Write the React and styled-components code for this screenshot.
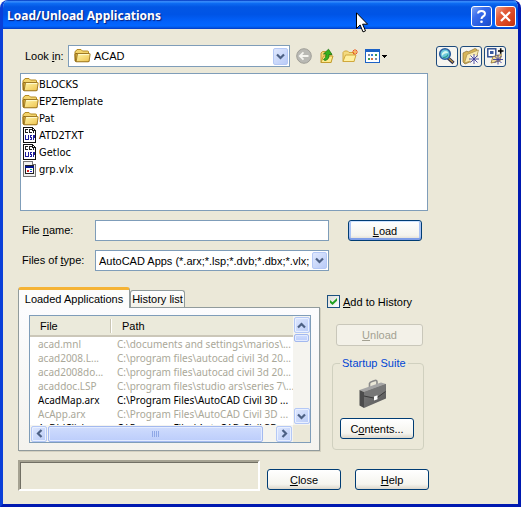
import React, {useState} from 'react';
import styled, {createGlobalStyle, css} from 'styled-components';

const GlobalStyle = createGlobalStyle`
    * {
        box-sizing: border-box;
    }
    body {
        margin: 0;
        background-color: #fff;
        color: #000;
        font: 11px/14px "Liberation Sans", Arial, sans-serif;
    }
    button, input, select {
        margin: 0;
        font: inherit;
        color: inherit;
    }
`
const Window = styled.div`
    min-width: 480px;
    border: solid #0a3fd8;
    border-width: 0 3px 3px;
    border-right-color: #0019b0;
    border-bottom-color: #0019b0;
    border-radius: 8px 8px 0 0;
    background-color: #ebe8d8;
    overflow: hidden;
`
const TitleBar = styled.header`
    position: relative;
    display: flex;
    align-items: center;
    gap: 3px;
    height: 29px;
    margin: 0 -3px;
    padding: 3px 5px 0 7px;
    background: linear-gradient(#0a4fd0 0, #3c94ff 5%, #0d6bf2 12%, #0256e4 24%, #0054e6 50%, #0261fb 75%, #0366ff 88%, #0452d8 100%);
    box-shadow: inset 2px 0 2px #0a3fd0, inset -2px 0 2px #001ea0;
`
const Title = styled.h1`
    flex: 1;
    margin: 0;
    color: #fff;
    font: bold 12px/20px "Noto Sans", sans-serif;
    text-shadow: 1px 1px 1px #0b1f7c;
`
const CaptionButton = styled.button`
    display: flex;
    align-items: center;
    justify-content: center;
    width: 21px;
    height: 21px;
    padding: 0;
    border: 1px solid #fff;
    border-radius: 3px;
    background: ${({$close}) => $close
        ? 'linear-gradient(135deg, #f0a08a 0, #e25a38 35%, #d6401a 75%, #b83412 100%)'
        : 'linear-gradient(135deg, #7fa4f5 0, #3a6cec 35%, #2358dc 75%, #1d49c2 100%)'};
`
const Pointer = styled.svg`
    position: absolute;
    top: 12px;
    left: 356px;
    pointer-events: none;
    z-index: 1;
`
const Body = styled.main`
    padding: 16px 0 13px 15px;
`
const LookRow = styled.div`
    display: flex;
    align-items: center;
    padding: 0 12px 0 7px;
`
const LookLabel = styled.label`
    width: 43px;
`
const Combo = styled.div`
    display: flex;
    align-items: center;
    flex: 1;
    min-width: 0;
    height: ${({$tall}) => $tall ? 22 : 21}px;
    padding: 1px 1px 1px ${({$tall}) => $tall ? 5 : 0}px;
    border: 1px solid #7f9db9;
    background-color: #fff;
`
const ComboSelect = styled.select`
    flex: 1;
    min-width: 0;
    height: 17px;
    padding: 0 3px;
    border: 0;
    outline: 0;
    background: none;
    appearance: none;
    white-space: nowrap;
    overflow: hidden;
    text-overflow: clip;
`
/*квадратная кнопка со стрелкой: комбобоксы и полосы прокрутки*/
const arrowFace = css`
    display: flex;
    align-items: center;
    justify-content: center;
    flex: none;
    padding: 0;
    border: 1px solid #b4c8f6;
    border-radius: 2px;
    background: linear-gradient(135deg, #dfe8fe, #b9cbf7);
`
const ComboArrow = styled.span`
    ${arrowFace}
    width: 15px;
    height: 17px;
    pointer-events: none;
`
const ScrollArrow = styled.button`
    ${arrowFace}
    width: 16px;
    height: 16px;
    box-shadow: inset 0 0 0 1px #e9f0ff;
`
const NavTools = styled.div`
    display: flex;
    align-items: center;
    gap: 7px;
    margin: 0 48px 0 6px;
`
const NavButton = styled.button`
    display: flex;
    padding: 0;
    border: 0;
    background: none;
`
const ToolGroup = styled.div`
    display: flex;
    gap: 2px;
`
const ToolButton = styled.button`
    display: flex;
    align-items: center;
    justify-content: center;
    width: 22px;
    height: 21px;
    padding: 0;
    border: 1px solid #1d4a7c;
    border-radius: 3px;
    background-color: #f6f5f0;
`
const FileList = styled.ul`
    min-height: 138px;
    margin: 6px 90px 0 2px;
    padding: 2px 1px;
    border: 1px solid #7f9db9;
    background-color: #fff;
    list-style: none;
    font-family: "DejaVu Sans Condensed", "DejaVu Sans", sans-serif;
`
const FileItem = styled.li`
    display: flex;
    align-items: center;
    height: 17px;
`
const Fields = styled.div`
    display: grid;
    grid-template-columns: 73px 1fr 74px;
    grid-auto-rows: 21px;
    align-items: center;
    gap: 9px 0;
    margin: 9px 96px 0 4px;
`
const FieldLabel = styled.label`
    padding-bottom: 2px;
`
const FieldCell = styled.div`
    display: flex;
    min-width: 0;
    margin-right: 19px;
`
const TextInput = styled.input`
    width: 100%;
    height: 21px;
    padding: 0 3px;
    border: 1px solid #7f9db9;
    outline: 0;
    background-color: #fff;
`
const PushButton = styled.button`
    width: ${({$wide}) => $wide ? 87 : 74}px;
    height: ${({$wide}) => $wide ? 22 : 21}px;
    padding: 0;
    border: 1px solid #003c74;
    border-radius: 3px;
    background: linear-gradient(#fff, #f5f4ee 75%, #dcd7cc);
    ${({$primary}) => $primary && css`
        box-shadow: inset 0 1px 0 #cee3ff, inset 0 -2px 0 #7f9ee8, inset 2px 0 0 #a9c3f5, inset -2px 0 0 #a9c3f5;
    `}
    &:disabled {
        border-color: #c9c7ba;
        background: #f3f1e8;
        color: #a3a192;
    }
`
const Lower = styled.div`
    display: flex;
    gap: 7px;
    margin: 16px 94px 0 0;
`
const TabBox = styled.section`
    flex: 1;
    min-width: 0;
`
const TabBar = styled.div`
    display: flex;
    align-items: flex-end;
    height: 20px;
`
const Tab = styled.button`
    position: relative;
    width: ${({$active}) => $active ? 112 : 55}px;
    height: ${({$active}) => $active ? 21 : 17}px;
    margin-bottom: ${({$active}) => $active ? -1 : 0}px;
    padding: 0;
    border: 1px solid #919b9c;
    border-bottom: 0;
    border-radius: 3px 3px 0 0;
    background: linear-gradient(#fff, #f3f2ea);
    white-space: nowrap;
    z-index: 1;
    ${({$active}) => $active && css`
        border-top: 3px solid #f5b335;
        background: #fcfcfb;
    `}
`
const TabPanel = styled.div`
    padding: 7px 8px 7px 10px;
    border: 1px solid #919b9c;
    background: linear-gradient(#fcfcfe, #f4f3ee);
    box-shadow: 1px 1px 0 #d3d0c0;
`
const ListFrame = styled.div`
    display: grid;
    grid-template-columns: 1fr 17px;
    grid-template-rows: 109px 17px;
    border: 1px solid #7f9db9;
    background-color: #ebe8d8;
`
const TableView = styled.div`
    overflow: hidden;
    background-color: #fff;
`
const AppTable = styled.table`
    width: 100%;
    table-layout: fixed;
    border-collapse: separate;
    border-spacing: 0;
`
const HeadCell = styled.th`
    width: ${({$width}) => $width || 'auto'};
    height: 21px;
    padding: 0 0 0 10px;
    border-bottom: 2px solid #cbc7b8;
    background: linear-gradient(90deg, #c9c5b3 50%, #fff 50%) right center / 2px 14px no-repeat #ebeadb;
    font-weight: normal;
    text-align: left;
    &:last-child {
        background: #ebeadb;
    }
`
const Cell = styled.td`
    height: 14px;
    padding: 0 0 0 ${({$path}) => $path ? 5 : 8}px;
    color: ${({$dim}) => $dim ? '#aaa899' : '#000'};
    font: 10px/14px "Noto Sans", sans-serif;
    white-space: nowrap;
`
const Track = styled.div`
    display: flex;
    flex-direction: ${({$horizontal}) => $horizontal ? 'row' : 'column'};
    align-items: center;
    padding: ${({$horizontal}) => $horizontal ? '0 1px' : '1px 0'};
    background-color: #f5f4ef;
`
const Thumb = styled.div`
    display: flex;
    align-items: center;
    justify-content: center;
    flex: ${({$horizontal}) => $horizontal ? '1 1 auto' : '0 0 8px'};
    width: ${({$horizontal}) => $horizontal ? 'auto' : '15px'};
    height: ${({$horizontal}) => $horizontal ? '16px' : '8px'};
    margin: ${({$horizontal}) => $horizontal ? '0 13px 0 1px' : '1px 0 auto'};
    border: 1px solid #a3b9ef;
    border-radius: 2px;
    background: linear-gradient(#cfdcfd, #bccdfb);
    box-shadow: inset 0 0 0 1px #e3ebff;
`
const SideColumn = styled.aside`
    width: 97px;
    padding-top: 8px;
`
const CheckRow = styled.label`
    display: flex;
    align-items: center;
    gap: 3px;
    height: 13px;
    white-space: nowrap;
`
const CheckBox = styled.input`
    position: relative;
    width: 13px;
    height: 13px;
    border: 1px solid #1c5180;
    background: linear-gradient(135deg, #dcdcd7, #fff);
    appearance: none;
    &:checked::after {
        content: "";
        position: absolute;
        inset: 2px;
        background-color: #21a121;
        clip-path: polygon(0 28%, 36% 62%, 100% 0, 100% 40%, 36% 100%, 0 68%);
    }
`
const UnloadRow = styled.div`
    display: flex;
    margin: 16px 0 10px 9px;
`
const Suite = styled.fieldset`
    min-width: 0;
    height: 94px;
    margin: 0 0 0 5px;
    padding: 0 7px;
    border: 1px solid #d0d0bf;
    border-radius: 4px;
    legend {
        padding: 0 2px;
        color: #0046d5;
        white-space: nowrap;
    }
`
const SuiteBody = styled.div`
    display: flex;
    flex-direction: column;
    gap: 9px;
    padding-top: 9px;
    svg {
        margin-left: 19px;
    }
`
const Footer = styled.footer`
    display: flex;
    align-items: flex-end;
    margin: 9px 89px 0 0;
`
const StatusBox = styled.output`
    flex: 1;
    height: 31px;
    margin-right: 7px;
    border: 2px solid;
    border-color: #a5a292 #fff #fff #a5a292;
    box-shadow: inset 1px 1px 0 #716f64;
`
const FooterButtons = styled.div`
    display: flex;
    gap: 14px;
    padding-bottom: 1px;
`

const FolderIcon = () => (
    <svg width="17" height="16" viewBox="0 0 17 16">
        <path d="M1 13V4q0-1 1-1l1-1.500h4l1.500 1.500h5q1 0 1 1v2" fill="#f3d46c" stroke="#b48a22"/>
        <path d="M1.500 13.500L1 6.500q0-1 1-1h11.500l1.500 8z" fill="#d9ab3c" stroke="#8f6a14"/>
        <path d="M3.500 5.500h12q.8 0 .6 1l-1 6.500q-.2.800-1 .8h-12z" fill="url(#folderFace)" stroke="#9a7420" strokeWidth=".9"/>
        <path d="M4.300 6.600h10.600" stroke="#fffbd2"/>
        <defs>
            <linearGradient id="folderFace" x1="0" y1="0" x2="1" y2="1">
                <stop offset="0" stopColor="#fff6a8"/>
                <stop offset="1" stopColor="#eec24e"/>
            </linearGradient>
        </defs>
    </svg>
)
const LispIcon = () => (
    <svg width="17" height="17" viewBox="0 0 17 17" shapeRendering="crispEdges">
        <path d="M1.500.500h9l3 3v12h-12z" fill="#fff" stroke="#111"/>
        <path d="M10.500.500v3h3" fill="none" stroke="#111"/>
        <path d="M5.500 2.500h-2v3h2M9.500 2.500h-2v3h2M11.500 4v2" fill="none" stroke="#222"/>
        <path d="M3.500 8v4.500h2M6.500 8v5M10 8.500H8.500v2h1v2H8M11.500 13V8.500h1v2h-1" fill="none" stroke="#1c1c9c"/>
    </svg>
)
const VlxIcon = () => (
    <svg width="17" height="17" viewBox="0 0 17 17" shapeRendering="crispEdges">
        <path d="M1.500.500h9l3 3v12h-12z" fill="#f0f0f0" stroke="#777"/>
        <path d="M10.500.500v3h3" fill="#fff" stroke="#777"/>
        <rect x="3.500" y="4.500" width="8" height="8" fill="#fff" stroke="#222"/>
        <path d="M3 5.500h9" stroke="#00148c" strokeWidth="2"/>
        <path d="M5 9h2v2H5z" fill="#d22"/>
        <path d="M8 8h2v1H8z" fill="#1a9"/>
        <path d="M8 10h2v1H8z" fill="#22c"/>
    </svg>
)
const icons = {folder: FolderIcon, lisp: LispIcon, vlx: VlxIcon}

const Chevron = ({turn = 0}) => (
    <svg width="9" height="9" viewBox="0 0 9 9">
        <path d="M1 2.500l3.500 3.500L8 2.500" fill="none" stroke="#4d6185" strokeWidth="2.200" transform={`rotate(${turn} 4.500 4.500)`}/>
    </svg>
)
const BackIcon = () => (
    <svg width="16" height="16" viewBox="0 0 16 16">
        <circle cx="8" cy="8" r="7.300" fill="#b9b9b4" stroke="#a09f98"/>
        <path d="M12.500 8H4M7.500 4.300L3.800 8l3.700 3.700" fill="none" stroke="#f5f5f0" strokeWidth="1.800"/>
    </svg>
)
const UpIcon = () => (
    <svg width="16" height="16" viewBox="0 0 16 16">
        <path d="M2 14.500V5l1.500-1.500h3L8 5h4v9.500z" fill="#f2d572" stroke="#c39c2e"/>
        <path d="M2 14.500L4.500 8H14l-2 6.500z" fill="#fdea8c" stroke="#c39c2e"/>
        <path d="M6 12.500q4.500-1 4-6H13L9.500 1.200 4.500 6H7q.5 3.500-2.500 5.500z" fill="#34b21f" stroke="#1d7410" strokeWidth=".8"/>
    </svg>
)
const NewFolderIcon = () => (
    <svg width="16" height="16" viewBox="0 0 16 16">
        <path d="M1 13.500v-9L2.500 3h3L7 4.500h5v9z" fill="#f4da80" stroke="#d0a83c"/>
        <path d="M1 13.500L3.500 7H14l-2 6.500z" fill="#fff0a0" stroke="#d0a83c"/>
        <path d="M13 1v6M10 4h6M11 2l4 4M15 2l-4 4" stroke="#ec5a1c"/>
        <circle cx="13" cy="4" r="1" fill="#ffe26a"/>
    </svg>
)
const ViewIcon = () => (
    <svg width="23" height="16" viewBox="0 0 23 16" shapeRendering="crispEdges">
        <rect x=".5" y="1.500" width="14" height="13" fill="#fff" stroke="#1c62c6"/>
        <path d="M0 2.500h15" stroke="#1c62c6" strokeWidth="3"/>
        <path d="M3 6h2v2H3zM10 10h2v2h-2z" fill="#7d8ba8"/>
        <path d="M6 6h2v2H6z" fill="#3b79d4"/>
        <path d="M10 6h2v2h-2zM3 10h2v2H3z" fill="#3d9b55"/>
        <path d="M6 10h2v2H6z" fill="#d8713b"/>
        <path d="M17 7h5v1h-1v1h-1v1h-1V9h-1V8h-1z" fill="#000"/>
    </svg>
)
const FindIcon = () => (
    <svg width="18" height="18" viewBox="0 0 18 18">
        <path d="M10 11l5.500 5" stroke="#2a2c50" strokeWidth="3.200"/>
        <path d="M10.500 11.200l4.500 4" stroke="#c09a42" strokeWidth="1.200"/>
        <circle cx="7" cy="7" r="5.300" fill="#6cc9dc" stroke="#2c5d9e" strokeWidth="1.600"/>
        <path d="M4 9q-1-3.500 3-5 3 0 3 2-4 0-6 3z" fill="#d8f8f0"/>
        <path d="M5 10.500q4 0 5-3" fill="none" stroke="#2f9a8a" strokeWidth="1.200"/>
    </svg>
)
const Star = ({x, y}) => (
    <path transform={`translate(${x} ${y})`} d="M0-5V5M-5 0H5M-3.500-3.500L3.500 3.500M3.500-3.500L-3.500 3.500" stroke="#3a3a9c" strokeWidth=".9"/>
)
const FavoritesIcon = () => (
    <svg width="18" height="18" viewBox="0 0 18 18">
        <path d="M1 15V6l4-2 1 1 7-3.500 2 1V12L3 17z" fill="#d8b65a" stroke="#8c7030" strokeWidth=".7"/>
        <path d="M2.500 16L5 7.500 16.500 3 14 12z" fill="#f9ebb4" stroke="#a88c48" strokeWidth=".7"/>
        <circle cx="12" cy="12" r="4" fill="#fff" opacity=".8"/>
        <Star x={12} y={12}/>
    </svg>
)
const AddFavoriteIcon = () => (
    <svg width="18" height="18" viewBox="0 0 18 18">
        <rect x="1.800" y="1.800" width="8" height="8" fill="#fff" stroke="#27478c" strokeWidth="1.400"/>
        <rect x="4" y="4" width="3.500" height="3" fill="#3a5a9e"/>
        <path d="M12 4h5.500M14.700 1.200v5.600" stroke="#000" strokeWidth="1.600"/>
        <path d="M5 16L7 9.500l8.500-2L14 14z" fill="#f2dd94" stroke="#8c7030" strokeWidth=".8"/>
        <Star x={12} y={12.500}/>
    </svg>
)
const BriefcaseIcon = () => (
    <svg width="28" height="30" viewBox="0 0 28 30">
        <path d="M10.500 8V4.500Q11 3 13 2.500L16 1.500q2-.5 2 1.500v3" fill="none" stroke="#8a8a8a" strokeWidth="1.600"/>
        <path d="M.500 11L22 3.500l5 1.500-22 8z" fill="#a5a5a5"/>
        <path d="M.500 11L5 13v16l-4.500-2.500z" fill="#4c4c4c"/>
        <path d="M5 13l22-8v14.500L5 29z" fill="url(#caseFace)"/>
        <path d="M5 13l22-8-.500 7.500-9.500 6.500L5 17z" fill="#777"/>
        <path d="M5 17l12 2.500 9.500-7" fill="none" stroke="#3a3a3a"/>
        <path d="M15 17.500l3.500-1.200v4L15 21.500z" fill="#fff"/>
        <defs>
            <linearGradient id="caseFace" x1="0" y1="0" x2="1" y2="1">
                <stop offset="0" stopColor="#7c7c7c"/>
                <stop offset="1" stopColor="#585858"/>
            </linearGradient>
        </defs>
    </svg>
)

const files = [
    {name: 'BLOCKS', type: 'folder'},
    {name: 'EPZTemplate', type: 'folder'},
    {name: 'Pat', type: 'folder'},
    {name: 'ATD2TXT', type: 'lisp'},
    {name: 'Getloc', type: 'lisp'},
    {name: 'grp.vlx', type: 'vlx'}
]
const loadedApps = [
    {file: 'acad.mnl', path: 'C:\\documents and settings\\marios\\...', dim: true},
    {file: 'acad2008.L...', path: 'C:\\program files\\autocad civil 3d 20...', dim: true},
    {file: 'acad2008do...', path: 'C:\\program files\\autocad civil 3d 20...', dim: true},
    {file: 'acaddoc.LSP', path: 'C:\\program files\\studio ars\\series 7\\...', dim: true},
    {file: 'AcadMap.arx', path: 'C:\\Program Files\\AutoCAD Civil 3D ...'},
    {file: 'AcApp.arx', path: 'C:\\Program Files\\AutoCAD Civil 3D ...', dim: true},
    {file: 'AcDblClick.arx', path: 'C:\\Program Files\\AutoCAD Civil 3D ...'}
]

/*последняя строка таблицы видна частично, как в прокручиваемом списке*/
const LoadedList = () => (
    <ListFrame>
        <TableView>
            <AppTable>
                <thead>
                    <tr>
                        <HeadCell $width="82px">File</HeadCell>
                        <HeadCell>Path</HeadCell>
                    </tr>
                </thead>
                <tbody>
                    {loadedApps.map(({file, path, dim}) => (
                        <tr key={file}>
                            <Cell $dim={dim}>{file}</Cell>
                            <Cell $dim={dim} $path>{path}</Cell>
                        </tr>
                    ))}
                </tbody>
            </AppTable>
        </TableView>
        <Track>
            <ScrollArrow aria-label="Scroll up"><Chevron turn={180}/></ScrollArrow>
            <Thumb/>
            <ScrollArrow aria-label="Scroll down"><Chevron/></ScrollArrow>
        </Track>
        <Track $horizontal>
            <ScrollArrow aria-label="Scroll left"><Chevron turn={90}/></ScrollArrow>
            <Thumb $horizontal>
                <svg width="8" height="6" viewBox="0 0 8 6" shapeRendering="crispEdges">
                    <path d="M.500 0v6M2.500 0v6M4.500 0v6M6.500 0v6" stroke="#8fa8e6"/>
                </svg>
            </Thumb>
            <ScrollArrow aria-label="Scroll right"><Chevron turn={-90}/></ScrollArrow>
        </Track>
    </ListFrame>
)

const App = () => {
    const [fileName, setFileName] = useState('')
    const [addToHistory, setAddToHistory] = useState(true)
    return (
        <>
            <GlobalStyle/>
            <Window>
                <TitleBar>
                    <Title>Load/Unload Applications</Title>
                    <CaptionButton aria-label="Help">
                        <svg width="13" height="15" viewBox="0 0 13 15">
                            <path d="M3 4.500Q3.200 2 6.500 2T10 4.800q0 1.700-2 2.700-1.500.8-1.500 2.500" fill="none" stroke="#fff" strokeWidth="2"/>
                            <circle cx="6.500" cy="12.800" r="1.300" fill="#fff"/>
                        </svg>
                    </CaptionButton>
                    <CaptionButton aria-label="Close window" $close>
                        <svg width="13" height="13" viewBox="0 0 13 13">
                            <path d="M2 2l9 9M11 2l-9 9" stroke="#fff" strokeWidth="2.200"/>
                        </svg>
                    </CaptionButton>
                    <Pointer width="13" height="21" viewBox="0 0 13 21">
                        <path d="M.500.800v15.700l3.600-3.600 2.900 7 2.500-1-2.900-6.700h5z" fill="#fff" stroke="#000"/>
                    </Pointer>
                </TitleBar>
                <Body>
                    <LookRow>
                        <LookLabel htmlFor="lookIn">Look <u>i</u>n:</LookLabel>
                        <Combo $tall>
                            <FolderIcon/>
                            <ComboSelect id="lookIn">
                                <option>ACAD</option>
                            </ComboSelect>
                            <ComboArrow><Chevron/></ComboArrow>
                        </Combo>
                        <NavTools>
                            <NavButton aria-label="Back"><BackIcon/></NavButton>
                            <NavButton aria-label="Up one level"><UpIcon/></NavButton>
                            <NavButton aria-label="New folder"><NewFolderIcon/></NavButton>
                            <NavButton aria-label="View menu"><ViewIcon/></NavButton>
                        </NavTools>
                        <ToolGroup>
                            <ToolButton aria-label="Find file"><FindIcon/></ToolButton>
                            <ToolButton aria-label="Look in favorites"><FavoritesIcon/></ToolButton>
                            <ToolButton aria-label="Add to favorites"><AddFavoriteIcon/></ToolButton>
                        </ToolGroup>
                    </LookRow>
                    <FileList>
                        {files.map(({name, type}) => {
                            const Icon = icons[type]
                            return <FileItem key={name}><Icon/>{name}</FileItem>
                        })}
                    </FileList>
                    <Fields>
                        <FieldLabel htmlFor="fileName">File <u>n</u>ame:</FieldLabel>
                        <FieldCell>
                            <TextInput
                                id="fileName"
                                value={fileName}
                                onChange={(e) => setFileName(e.target.value)}
                            />
                        </FieldCell>
                        <PushButton $primary><u>L</u>oad</PushButton>
                        <FieldLabel htmlFor="fileType">Files of <u>t</u>ype:</FieldLabel>
                        <FieldCell>
                            <Combo>
                                <ComboSelect id="fileType">
                                    <option>AutoCAD Apps (*.arx;*.lsp;*.dvb;*.dbx;*.vlx;*.fas)</option>
                                </ComboSelect>
                                <ComboArrow><Chevron/></ComboArrow>
                            </Combo>
                        </FieldCell>
                    </Fields>
                    <Lower>
                        <TabBox>
                            <TabBar role="tablist">
                                <Tab role="tab" aria-selected="true" $active>Loaded Applications</Tab>
                                <Tab role="tab" aria-selected="false">History list</Tab>
                            </TabBar>
                            <TabPanel role="tabpanel">
                                <LoadedList/>
                            </TabPanel>
                        </TabBox>
                        <SideColumn>
                            <CheckRow>
                                <CheckBox
                                    type="checkbox"
                                    checked={addToHistory}
                                    onChange={(e) => setAddToHistory(e.target.checked)}
                                />
                                <span><u>A</u>dd to History</span>
                            </CheckRow>
                            <UnloadRow>
                                <PushButton $wide disabled><u>U</u>nload</PushButton>
                            </UnloadRow>
                            <Suite>
                                <legend>Startup Suite</legend>
                                <SuiteBody>
                                    <BriefcaseIcon/>
                                    <PushButton>C<u>o</u>ntents...</PushButton>
                                </SuiteBody>
                            </Suite>
                        </SideColumn>
                    </Lower>
                    <Footer>
                        <StatusBox/>
                        <FooterButtons>
                            <PushButton><u>C</u>lose</PushButton>
                            <PushButton><u>H</u>elp</PushButton>
                        </FooterButtons>
                    </Footer>
                </Body>
            </Window>
        </>
    )
}
export default App
